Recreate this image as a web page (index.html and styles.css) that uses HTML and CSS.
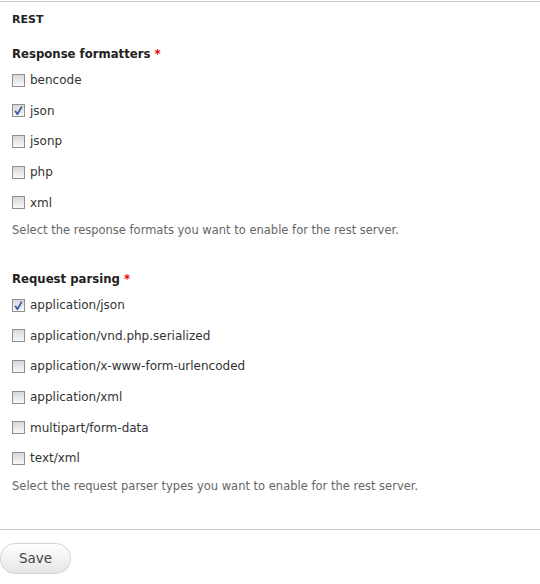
FILE: index.html
```html
<!DOCTYPE html>
<html>
<head>
<meta charset="utf-8">
<link rel="stylesheet" href="styles.css">
</head>
<body>
<form class="page">
  <fieldset class="group">
    <div class="legend">REST</div>
    <div class="field">
      <div class="field-label">Response formatters <span class="req">*</span></div>
      <div class="options">
        <label class="option"><span class="box"></span>bencode</label>
        <label class="option"><span class="box checked"><svg viewBox="0 0 13 13" width="13" height="13"><path d="M3.2 6.8 L5.4 10.2 L9.8 2.6" fill="none" stroke="#3b5cad" stroke-width="1.8" stroke-linejoin="round"/></svg></span>json</label>
        <label class="option"><span class="box"></span>jsonp</label>
        <label class="option"><span class="box"></span>php</label>
        <label class="option"><span class="box"></span>xml</label>
      </div>
      <div class="desc">Select the response formats you want to enable for the rest server.</div>
    </div>
    <div class="field second">
      <div class="field-label">Request parsing <span class="req">*</span></div>
      <div class="options">
        <label class="option"><span class="box checked"><svg viewBox="0 0 13 13" width="13" height="13"><path d="M3.2 6.8 L5.4 10.2 L9.8 2.6" fill="none" stroke="#3b5cad" stroke-width="1.8" stroke-linejoin="round"/></svg></span>application/json</label>
        <label class="option"><span class="box"></span>application/vnd.php.serialized</label>
        <label class="option"><span class="box"></span>application/x-www-form-urlencoded</label>
        <label class="option"><span class="box"></span>application/xml</label>
        <label class="option"><span class="box"></span>multipart/form-data</label>
        <label class="option"><span class="box"></span>text/xml</label>
      </div>
      <div class="desc">Select the request parser types you want to enable for the rest server.</div>
    </div>
  </fieldset>
  <div class="actions">
    <button type="button" class="btn">Save</button>
  </div>
</form>
</body>
</html>
```
FILE: styles.css
```css
html, body {
  margin: 0;
  padding: 0;
  background: #fff;
}
body {
  font-family: "DejaVu Sans", Verdana, sans-serif;
  color: #333;
  font-size: 12px;
}
.page {
  padding-top: 1px;
}
.group {
  margin: 0;
  padding: 12px 12px 36px;
  border: 0;
  border-top: 1px solid #ccc;
  border-bottom: 1px solid #ccc;
}
.legend {
  font-weight: bold;
  font-size: 11px;
  color: #222;
  line-height: 12px;
}
.field {
  margin-top: 20px;
}
.field.second {
  margin-top: 34px;
}
.field-label {
  font-family: "DejaVu Sans Condensed", "DejaVu Sans", sans-serif;
  font-weight: bold;
  font-size: 13px;
  color: #222;
  line-height: 16px;
}
.req {
  color: #e00;
}
.options {
  display: flex;
  flex-direction: column;
  margin-top: 3px;
}
.option {
  display: flex;
  align-items: center;
  height: 30.6px;
  font-size: 12px;
  color: #333;
}
.box {
  width: 11px;
  height: 11px;
  border: 1px solid #8f8f8f;
  background: linear-gradient(#d8d8d8, #f8f8f8);
  margin-right: 5px;
  position: relative;
  box-sizing: content-box;
}
.box svg {
  position: absolute;
  left: -1px;
  top: -1px;
}
.desc {
  font-size: 11.5px;
  color: #666;
  margin-top: 5px;
  line-height: 14px;
}
.actions {
  padding-top: 13px;
}
.btn {
  width: 71px;
  height: 31px;
  border: 1px solid #d4d4d4;
  border-radius: 15px;
  background: linear-gradient(#fefefe, #e6e6e6);
  font-family: "DejaVu Sans", Verdana, sans-serif;
  font-size: 13.5px;
  color: #444;
  padding: 0;
}
```
